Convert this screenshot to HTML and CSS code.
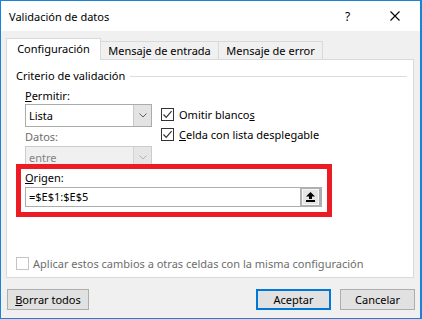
FILE: index.html
```html
<!DOCTYPE html>
<html lang="es">
<head>
<meta charset="utf-8">
<title>Validación de datos</title>
<link rel="stylesheet" href="styles.css">
</head>
<body>
<div class="window">
  <div class="titlebar">
    <span class="title">Validación de datos</span>
    <span class="help">?</span>
    <span class="close"><svg width="10" height="10" viewBox="0 0 10 10"><path d="M0.5 0.5 L9.5 9.5 M9.5 0.5 L0.5 9.5" stroke="#000" stroke-width="1.1" fill="none"/></svg></span>
  </div>
  <div class="tabs">
    <div class="tab tab-active">Configuración</div>
    <div class="tab tab-entrada">Mensaje de entrada</div>
    <div class="tab tab-error">Mensaje de error</div>
  </div>
  <div class="panel">
    <div class="group-title">Criterio de validación</div>
    <div class="fields">
      <div class="col-left">
        <div class="label"><u>P</u>ermitir:</div>
        <div class="combo">
          <span class="combo-text">Lista</span>
          <span class="combo-btn"><svg width="8" height="5" viewBox="0 0 8 5"><path d="M0.5 0.5 L4 4 L7.5 0.5" stroke="#606060" stroke-width="1" fill="none"/></svg></span>
        </div>
        <div class="label label-disabled label-datos">Datos:</div>
        <div class="combo combo-disabled">
          <span class="combo-text">entre</span>
          <span class="combo-btn"><svg width="8" height="5" viewBox="0 0 8 5"><path d="M0.5 0.5 L4 4 L7.5 0.5" stroke="#b5b5b5" stroke-width="1" fill="none"/></svg></span>
        </div>
      </div>
      <div class="col-right">
        <div class="check-row">
          <span class="checkbox"><svg width="11" height="11" viewBox="0 0 11 11"><path d="M1.5 5.5 L4.2 8.3 L9.6 2.2" stroke="#333" stroke-width="1.2" fill="none"/></svg></span>
          <span>Omitir blanco<u>s</u></span>
        </div>
        <div class="check-row">
          <span class="checkbox"><svg width="11" height="11" viewBox="0 0 11 11"><path d="M1.5 5.5 L4.2 8.3 L9.6 2.2" stroke="#333" stroke-width="1.2" fill="none"/></svg></span>
          <span><u>C</u>elda con lista desplegable</span>
        </div>
      </div>
    </div>
    <div class="origen">
      <div class="label"><u>O</u>rigen:</div>
      <div class="ref-input">
        <span class="ref-text">=$E$1:$E$5</span>
        <span class="ref-btn"><svg width="9" height="10" viewBox="0 0 9 10"><path d="M4.5 0 L9 4.5 L6 4.5 L6 7 L3 7 L3 4.5 L0 4.5 Z" fill="#000"/><rect x="0" y="8" width="9" height="2" fill="#000"/></svg></span>
      </div>
    </div>
    <div class="apply-row">
      <span class="checkbox checkbox-disabled"></span>
      <span>Aplicar estos cambios a otras celdas con la misma configuración</span>
    </div>
  </div>
  <div class="buttons">
    <div class="btn btn-clear"><u>B</u>orrar todos</div>
    <div class="btn btn-ok">Aceptar</div>
    <div class="btn btn-cancel">Cancelar</div>
  </div>
  <div class="highlight"></div>
</div>
</body>
</html>
```

FILE: styles.css
```css
html, body {
  margin: 0;
  padding: 0;
  background: #f0f0f0;
}
body {
  font-family: "Noto Sans", "Liberation Sans", Arial, sans-serif;
  font-size: 11px;
  color: #000;
}
.window {
  position: relative;
  width: 422px;
  height: 319px;
  box-sizing: border-box;
  border: 1px solid #1883d7;
  border-right-width: 2px;
  background: #f0f0f0;
  overflow: hidden;
}
.titlebar {
  height: 30px;
  background: #fff;
  display: flex;
  align-items: center;
  padding-left: 8px;
}
.title {
  flex: 1;
}
.help {
  width: 8px;
  margin-right: 37px;
  font-size: 12px;
}
.close {
  display: flex;
  width: 10px;
  height: 10px;
  margin-right: 20px;
}
.tabs {
  display: flex;
  align-items: flex-end;
  padding: 7px 0 0 5px;
  margin-bottom: -1px;
  position: relative;
  z-index: 1;
}
.tab {
  box-sizing: border-box;
  height: 18px;
  line-height: 17px;
  text-align: center;
  border-top: 1px solid #d9d9d9;
  border-right: 1px solid #d9d9d9;
  background: #f0f0f0;
  margin-bottom: 1px;
}
.tab-active {
  width: 95px;
  height: 22px;
  line-height: 20px;
  border-left: 1px solid #d9d9d9;
  background: #fff;
  margin-bottom: 0;
}
.tab-entrada {
  width: 118px;
}
.tab-error {
  width: 104px;
}
.panel {
  margin-left: 5px;
  width: 408px;
  height: 219px;
  box-sizing: border-box;
  border: 1px solid #d9d9d9;
  background: #fff;
  display: flex;
  flex-direction: column;
}
.group-title {
  display: flex;
  align-items: center;
  margin: 8px 6px 0 9px;
  height: 16px;
  line-height: 16px;
}
.group-title::after {
  content: "";
  flex: 1;
  height: 1px;
  background: #dcdcdc;
  margin-left: 5px;
}
.fields {
  display: flex;
  margin: 4px 0 0 18px;
}
.col-left {
  width: 127px;
  display: flex;
  flex-direction: column;
}
.label {
  height: 16px;
  line-height: 16px;
}
.label-disabled {
  color: #6d6d6d;
}
.label-datos {
  margin: 2px 0 1px;
}
.combo {
  box-sizing: border-box;
  height: 23px;
  border: 1px solid #ababab;
  background: #fff;
  display: flex;
  align-items: stretch;
}
.combo-text {
  flex: 1;
  padding-left: 3px;
  line-height: 21px;
}
.combo-btn {
  width: 17px;
  background: #e3e3e3;
  border-left: 1px solid #c8c8c8;
  display: flex;
  align-items: center;
  justify-content: center;
}
.combo-disabled {
  border-color: #cccccc;
  background: #f0f0f0;
}
.combo-disabled .combo-text {
  color: #838383;
}
.combo-disabled .combo-btn {
  background: #e6e6e6;
  border-left-color: #d4d4d4;
}
.col-right {
  margin-left: 9px;
  padding-top: 16px;
  display: flex;
  flex-direction: column;
}
.check-row {
  height: 20px;
  display: flex;
  align-items: center;
  gap: 5px;
}
.checkbox {
  box-sizing: border-box;
  width: 13px;
  height: 13px;
  border: 1px solid #333;
  background: #fff;
  display: flex;
}
.checkbox-disabled {
  border-color: #c4c4c4;
}
.origen {
  margin: 1px 0 0 18px;
  width: 297px;
}
.ref-input {
  margin-top: 1px;
  box-sizing: border-box;
  height: 20px;
  border: 1px solid #adadad;
  display: flex;
  align-items: stretch;
}
.ref-text {
  flex: 1;
  padding-left: 3px;
  line-height: 18px;
}
.ref-btn {
  box-sizing: border-box;
  width: 21px;
  margin: -1px 0 -1px 0;
  border: 2px solid #b0b0b0;
  box-shadow: inset 0 0 0 1px #f7f7f7;
  background: #e5e5e5;
  display: flex;
  align-items: center;
  justify-content: center;
}
.apply-row {
  margin: auto 0 4px 9px;
  height: 20px;
  display: flex;
  align-items: center;
  gap: 4px;
  color: #6d6d6d;
}
.buttons {
  display: flex;
  margin-top: 11px;
  padding: 0 5px 0 6px;
  gap: 9px;
}
.btn {
  box-sizing: border-box;
  height: 21px;
  width: 75px;
  border: 1px solid #adadad;
  background: #e1e1e1;
  text-align: center;
  line-height: 19px;
}
.btn-clear {
  width: 82px;
  margin-right: auto;
}
.btn-ok {
  border: 2px solid #0078d7;
  line-height: 17px;
}
.highlight {
  position: absolute;
  left: 15px;
  top: 163px;
  width: 316px;
  height: 53px;
  box-sizing: border-box;
  border: 5px solid #ed1c24;
}
```
